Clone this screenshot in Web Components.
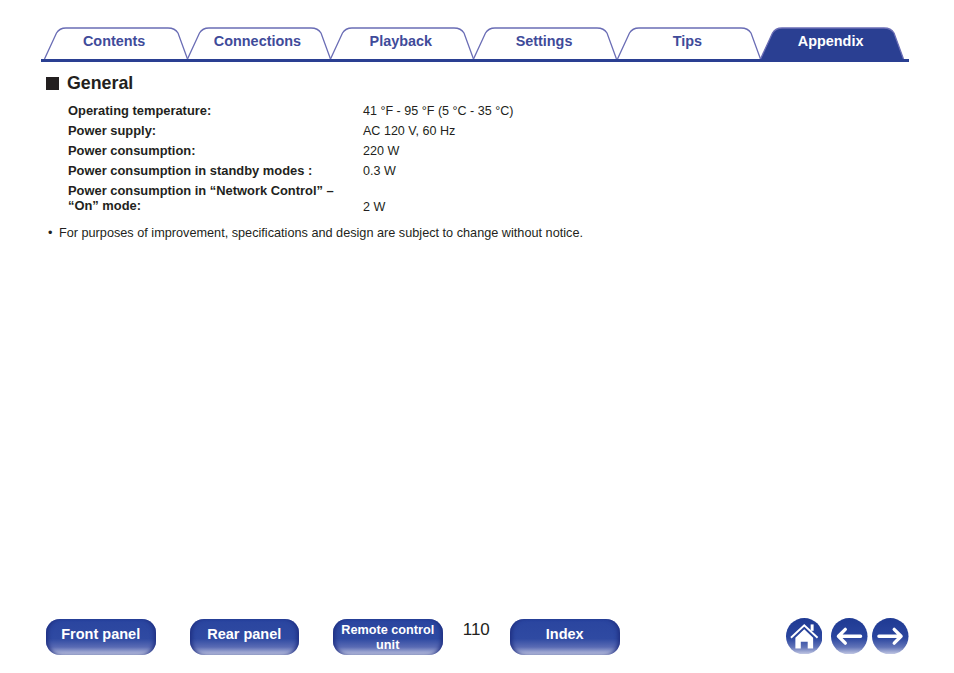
<!DOCTYPE html>
<html lang="en">
<head>
<meta charset="utf-8">
<title>General</title>
<style>
  html, body { margin: 0; background: #fff; }
  body { font-family: "Liberation Sans", Arial, sans-serif; color: #231f20; }
</style>
</head>
<body>
<manual-page>
  <tab-bar slot="tabs">
    <manual-tab>Contents</manual-tab>
    <manual-tab>Connections</manual-tab>
    <manual-tab>Playback</manual-tab>
    <manual-tab>Settings</manual-tab>
    <manual-tab>Tips</manual-tab>
    <manual-tab active>Appendix</manual-tab>
  </tab-bar>
  <spec-section slot="body" heading="General">
    <spec-row label="Operating temperature:">41 °F - 95 °F (5 °C - 35 °C)</spec-row>
    <spec-row label="Power supply:">AC 120 V, 60 Hz</spec-row>
    <spec-row label="Power consumption:">220 W</spec-row>
    <spec-row label="Power consumption in standby modes :">0.3 W</spec-row>
    <spec-row tall label="Power consumption in “Network Control” – “On” mode:">2 W</spec-row>
  </spec-section>
  <page-footer slot="footer" page="110"></page-footer>
</manual-page>

<script>
const pageTemplate = document.createElement("template");
pageTemplate.innerHTML = `
    <style>
      :host {
          display: grid;
          grid-template-rows: 62px 1fr auto;
          width: 954px;
          height: 673px;
      }
    </style>
    <slot name="tabs"></slot>
    <slot name="body"></slot>
    <slot name="footer"></slot>
`;

class ManualPage extends HTMLElement {
    constructor() {
        super();
        this.attachShadow({ mode: "open" });
        this.shadowRoot.append(pageTemplate.content.cloneNode(true));
    }
}

const tabBarTemplate = document.createElement("template");
tabBarTemplate.innerHTML = `
    <style>
      :host {
          display: flex;
          box-sizing: border-box;
          height: 62px;
          margin: 0 45px 0 41px;
          padding: 27px 0 0 2.5px;
          border-bottom: 3px solid #2a3f92;
      }
    </style>
    <slot></slot>
`;

class TabBar extends HTMLElement {
    constructor() {
        super();
        this.attachShadow({ mode: "open" });
        this.shadowRoot.append(tabBarTemplate.content.cloneNode(true));
    }
}

const tabTemplate = document.createElement("template");
tabTemplate.innerHTML = `
    <style>
      :host {
          display: grid;
          grid-template-columns: 143.3px;
          flex: 0 0 143.3px;
          height: 32px;
          font-size: 14.4px;
          font-weight: bold;
          color: #3f4b9a;
      }
      :host([active]) { color: #fff; }
      svg, #label { grid-area: 1 / 1; }
      svg { display: block; width: 144px; height: 32px; }
      path { fill: #fff; stroke: #6a6db5; stroke-width: 1.3; }
      :host([active]) path { fill: #2a3f92; }
      #label {
          position: relative;
          text-align: center;
          line-height: 28px;
          padding-right: 2px;
      }
    </style>
    <svg viewBox="0 0 144 32">
      <path d="M0.5 32 L12.5 6 Q15.5 1 22 1 H124 Q131 1 134 6 L143.5 32"/>
    </svg>
    <div id="label"><slot></slot></div>
`;

class ManualTab extends HTMLElement {
    constructor() {
        super();
        this.attachShadow({ mode: "open" });
        this.shadowRoot.append(tabTemplate.content.cloneNode(true));
    }
}

const sectionTemplate = document.createElement("template");
sectionTemplate.innerHTML = `
    <style>
      :host {
          display: block;
          padding: 11px 0 0 46px;
      }
      h2 {
          display: flex;
          align-items: center;
          gap: 8px;
          margin: 0 0 8px;
          font-size: 17.8px;
          line-height: 20px;
      }
      h2 i {
          width: 13px;
          height: 13px;
          background: #231f20;
      }
      #rows { margin-left: 22px; }
      p {
          display: flex;
          gap: 6.5px;
          margin: 10px 0 0 2px;
          font-size: 12.7px;
          line-height: 15px;
      }
    </style>
    <h2><i></i><span id="heading"></span></h2>
    <div id="rows"><slot></slot></div>
    <p><span>•</span><span>For purposes of improvement, specifications and design are subject to change without notice.</span></p>
`;

class SpecSection extends HTMLElement {
    constructor() {
        super();
        this.attachShadow({ mode: "open" });
        this.shadowRoot.append(sectionTemplate.content.cloneNode(true));
        this.shadowRoot.getElementById("heading").textContent = this.getAttribute("heading");
    }
}

const rowTemplate = document.createElement("template");
rowTemplate.innerHTML = `
    <style>
      :host {
          display: grid;
          grid-template-columns: 295px 1fr;
          align-items: end;
          padding: 2.5px 0;
          font-size: 12.55px;
          line-height: 15px;
      }
      #label {
          margin: -1px 0 1px;
          width: 270px;
          font-size: 12.9px;
          font-weight: bold;
      }
      :host([tall]) #value { margin-bottom: -1px; }
    </style>
    <div id="label"></div>
    <div id="value"><slot></slot></div>
`;

class SpecRow extends HTMLElement {
    constructor() {
        super();
        this.attachShadow({ mode: "open" });
        this.shadowRoot.append(rowTemplate.content.cloneNode(true));
        this.shadowRoot.getElementById("label").textContent = this.getAttribute("label");
    }
}

const navButtonTemplate = document.createElement("template");
navButtonTemplate.innerHTML = `
    <style>
      :host {
          display: flex;
          align-items: center;
          justify-content: center;
          box-sizing: border-box;
          width: 109.5px;
          height: 36px;
          padding-bottom: 6px;
          border-radius: 14px;
          background: linear-gradient(#2a459f 0, #2f4aa2 55%, #5a6bb4 78%, #c3c8e2 100%);
          box-shadow: inset 4px 0 4px -2px #1f2f80, inset -4px 0 4px -2px #1f2f80;
          color: #fff;
          font-size: 14.5px;
          font-weight: bold;
          text-align: center;
      }
      :host([small]) {
          padding: 2px 0 0;
          font-size: 12.7px;
          line-height: 15px;
      }
    </style>
    <slot></slot>
`;

class NavButton extends HTMLElement {
    constructor() {
        super();
        this.attachShadow({ mode: "open" });
        this.shadowRoot.append(navButtonTemplate.content.cloneNode(true));
    }
}

const roundIconTemplate = document.createElement("template");
roundIconTemplate.innerHTML = `
    <style>
      :host {
          display: block;
          width: 36.5px;
          height: 36.5px;
      }
      svg { display: block; width: 36.5px; height: 36.5px; }
    </style>
    <svg viewBox="0 0 37 37">
      <defs>
        <linearGradient id="fade" x1="0" y1="0" x2="0" y2="1">
          <stop offset="0" stop-color="#1f3a93"/>
          <stop offset="0.55" stop-color="#2b469f"/>
          <stop offset="0.8" stop-color="#6274b8"/>
          <stop offset="1" stop-color="#c8cde6"/>
        </linearGradient>
      </defs>
      <circle cx="18.5" cy="18.5" r="18.5" fill="url(#fade)"/>
      <g id="glyph"></g>
    </svg>
`;

const roundIconGlyphs = {
    home: `<path d="M5 20 L18.5 7.5 L32 20" fill="none" stroke="#fff" stroke-width="2"/>
           <path d="M25 6.5 H28 V13 H25 Z" fill="#fff"/>
           <path d="M9.5 20 L18.5 11.5 L27.5 20 V31 H22 V24 H15 V31 H9.5 Z" fill="#fff"/>`,
    back: `<path d="M14.5 11.5 L7.5 18.5 L14.5 25.5 M8 18.5 H30" fill="none" stroke="#fff" stroke-width="3.4" stroke-linecap="round" stroke-linejoin="round"/>`,
    next: `<path d="M22.5 11.5 L29.5 18.5 L22.5 25.5 M29 18.5 H7" fill="none" stroke="#fff" stroke-width="3.4" stroke-linecap="round" stroke-linejoin="round"/>`
};

class RoundIcon extends HTMLElement {
    constructor() {
        super();
        this.attachShadow({ mode: "open" });
        this.shadowRoot.append(roundIconTemplate.content.cloneNode(true));
        this.shadowRoot.getElementById("glyph").innerHTML = roundIconGlyphs[this.getAttribute("name")];
    }
}

const footerTemplate = document.createElement("template");
footerTemplate.innerHTML = `
    <style>
      :host {
          display: flex;
          height: 54px;
          padding-left: 46px;
      }
      #buttons { display: flex; gap: 34px; }
      #number {
          width: 67.5px;
          text-align: center;
          font-size: 17px;
          line-height: 21px;
      }
      #icons {
          display: flex;
          gap: 4.5px;
          margin: -1.5px 0 0 166px;
      }
      round-icon[name="home"] { margin-right: 4.5px; }
    </style>
    <div id="buttons">
      <nav-button>Front panel</nav-button>
      <nav-button>Rear panel</nav-button>
      <nav-button small>Remote control unit</nav-button>
    </div>
    <div id="number"></div>
    <nav-button>Index</nav-button>
    <div id="icons">
      <round-icon name="home"></round-icon>
      <round-icon name="back"></round-icon>
      <round-icon name="next"></round-icon>
    </div>
`;

class PageFooter extends HTMLElement {
    constructor() {
        super();
        this.attachShadow({ mode: "open" });
        this.shadowRoot.append(footerTemplate.content.cloneNode(true));
        this.shadowRoot.getElementById("number").textContent = this.getAttribute("page");
    }
}

customElements.define("manual-page", ManualPage);
customElements.define("tab-bar", TabBar);
customElements.define("manual-tab", ManualTab);
customElements.define("spec-section", SpecSection);
customElements.define("spec-row", SpecRow);
customElements.define("nav-button", NavButton);
customElements.define("round-icon", RoundIcon);
customElements.define("page-footer", PageFooter);
</script>
</body>
</html>
